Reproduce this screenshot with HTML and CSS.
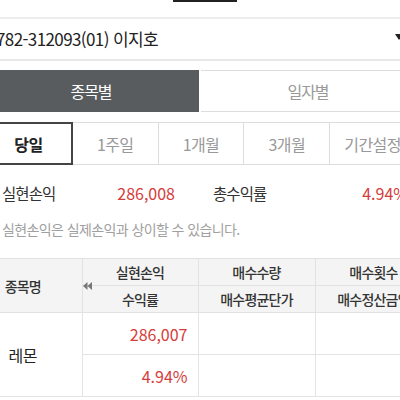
FILE: index.html
```html
<!DOCTYPE html>
<html lang="ko">
<head>
<meta charset="utf-8">
<link rel="stylesheet" href="styles.css">
</head>
<body>
<div class="page">
  <div class="topbar"><span class="thumb"></span></div>
  <div class="account">
    <span class="acc-text">782-312093(01) 이지호</span>
    <svg class="caret" width="8" height="6" viewBox="0 0 8 6"><path d="M0 0H8L4 6Z" fill="#222"/></svg>
  </div>
  <div class="tabs">
    <div class="tab tab-on">종목별</div>
    <div class="tab">일자별</div>
  </div>
  <div class="periods">
    <div class="period period-on">당일</div>
    <div class="period">1주일</div>
    <div class="period">1개월</div>
    <div class="period">3개월</div>
    <div class="period">기간설정</div>
  </div>
  <div class="summary">
    <div class="sum-half sum-left">
      <span class="sum-label">실현손익</span>
      <span class="sum-val">286,008</span>
    </div>
    <div class="sum-half sum-right">
      <span class="sum-label">총수익률</span>
      <span class="sum-val">4.94%</span>
    </div>
  </div>
  <p class="note">실현손익은 실제손익과 상이할 수 있습니다.</p>
  <div class="table-wrap">
    <table class="grid">
      <colgroup>
        <col class="c1"><col class="c2"><col class="c3"><col class="c4">
      </colgroup>
      <thead>
        <tr class="h1">
          <th rowspan="2" class="name-h">종목명</th>
          <th>실현손익</th>
          <th>매수수량</th>
          <th>매수횟수</th>
        </tr>
        <tr class="h2">
          <th>수익률</th>
          <th>매수평균단가</th>
          <th>매수정산금액</th>
        </tr>
      </thead>
      <tbody>
        <tr class="d1">
          <td rowspan="2" class="name">레몬</td>
          <td class="num red">286,007</td>
          <td></td>
          <td></td>
        </tr>
        <tr class="d2">
          <td class="num red">4.94%</td>
          <td></td>
          <td></td>
        </tr>
      </tbody>
    </table>
    <svg class="scroll-ico" width="9" height="8" viewBox="0 0 9 8"><path d="M0 4L4.5 0V8Z M4.5 4L9 0V8Z" fill="#777"/></svg>
  </div>
</div>
</body>
</html>
```
FILE: styles.css
```css
html, body {
  margin: 0;
  padding: 0;
  background: #fff;
  overflow: hidden;
}
body {
  font-family: "Noto Sans CJK KR", "Noto Sans", sans-serif;
  color: #333;
  width: 400px;
  height: 400px;
}
.page {
  margin-left: -16px;
  width: 432px;
}
.topbar {
  height: 17px;
  border-bottom: 2px solid #ececec;
  display: flex;
  align-items: flex-start;
}
.thumb {
  display: block;
  margin-left: 189px;
  width: 64px;
  height: 2px;
  background: #222;
}
.account {
  height: 40px;
  border-bottom: 2px solid #e8e8e8;
  display: flex;
  align-items: center;
  justify-content: space-between;
  padding: 0 13px 0 12px;
}
.acc-text {
  font-size: 17px;
  line-height: 20px;
  color: #222;
  letter-spacing: -0.6px;
}
.caret {
  margin-top: -4px;
}
.tabs {
  margin-top: 9px;
  display: flex;
  height: 42px;
}
.tab {
  flex: 1;
  display: flex;
  align-items: center;
  justify-content: center;
  font-size: 16px;
  line-height: 20px;
  letter-spacing: -1px;
  color: #999;
  border-top: 1px solid #ddd;
  border-bottom: 1px solid #ddd;
  border-right: 1px solid #ddd;
}
.tab-on {
  background: #585c5f;
  color: #fff;
  border-color: #585c5f;
  margin-right: 2px;
}
.periods {
  margin-top: 10px;
  display: flex;
  height: 41px;
  border-top: 1px solid #ddd;
  border-bottom: 1px solid #ddd;
}
.period {
  flex: 1;
  display: flex;
  align-items: center;
  justify-content: center;
  font-size: 16px;
  line-height: 20px;
  letter-spacing: -0.6px;
  color: #999;
  border-right: 1px solid #ddd;
}
.period-on {
  color: #222;
  font-weight: 700;
  border: 2px solid #444;
  margin: -1px 0;
}
.summary {
  display: flex;
  height: 30px;
  margin-top: 13px;
  align-items: center;
}
.sum-half {
  flex: 0 0 50%;
  box-sizing: border-box;
  display: flex;
  justify-content: space-between;
  align-items: center;
  font-size: 16px;
  line-height: 20px;
}
.sum-left {
  padding: 0 25px 0 18px;
}
.sum-right {
  padding: 0 8px 0 13px;
}
.sum-label {
  color: #333;
  font-size: 15.5px;
  letter-spacing: -0.9px;
}
.sum-val {
  color: #d43d3b;
}
.note {
  margin: 11px 0 0;
  padding-left: 18px;
  font-size: 14px;
  line-height: 20px;
  color: #a0a0a0;
  letter-spacing: -0.6px;
}
.table-wrap {
  position: relative;
  margin-top: 19px;
}
.grid {
  border-collapse: collapse;
  table-layout: fixed;
  width: 448px;
}
.c1 { width: 98px; }
.c2 { width: 116px; }
.c3 { width: 117px; }
.c4 { width: 117px; }
.grid th {
  background: #f4f4f4;
  font-weight: 500;
  font-size: 14px;
  line-height: 18px;
  letter-spacing: -0.8px;
  color: #333;
  border: 1px solid #e2e2e2;
  padding: 0;
  white-space: nowrap;
  overflow: hidden;
}
.grid th:first-child, .grid td:first-child { border-left: none; }
.h1 th, .h2 th { height: 26px; }
.name-h { padding-right: 20px !important; }
.grid td {
  border: 1px solid #e4e4e4;
  height: 41px;
  padding: 0;
  font-size: 16px;
  line-height: 20px;
}
.name {
  text-align: center;
  padding-right: 20px !important;
  font-size: 17px;
  color: #222;
  letter-spacing: -0.5px;
}
.num {
  text-align: right;
  padding-right: 10px !important;
}
.red { color: #d43d3b; }
.scroll-ico {
  position: absolute;
  left: 99px;
  top: 24px;
}
```
